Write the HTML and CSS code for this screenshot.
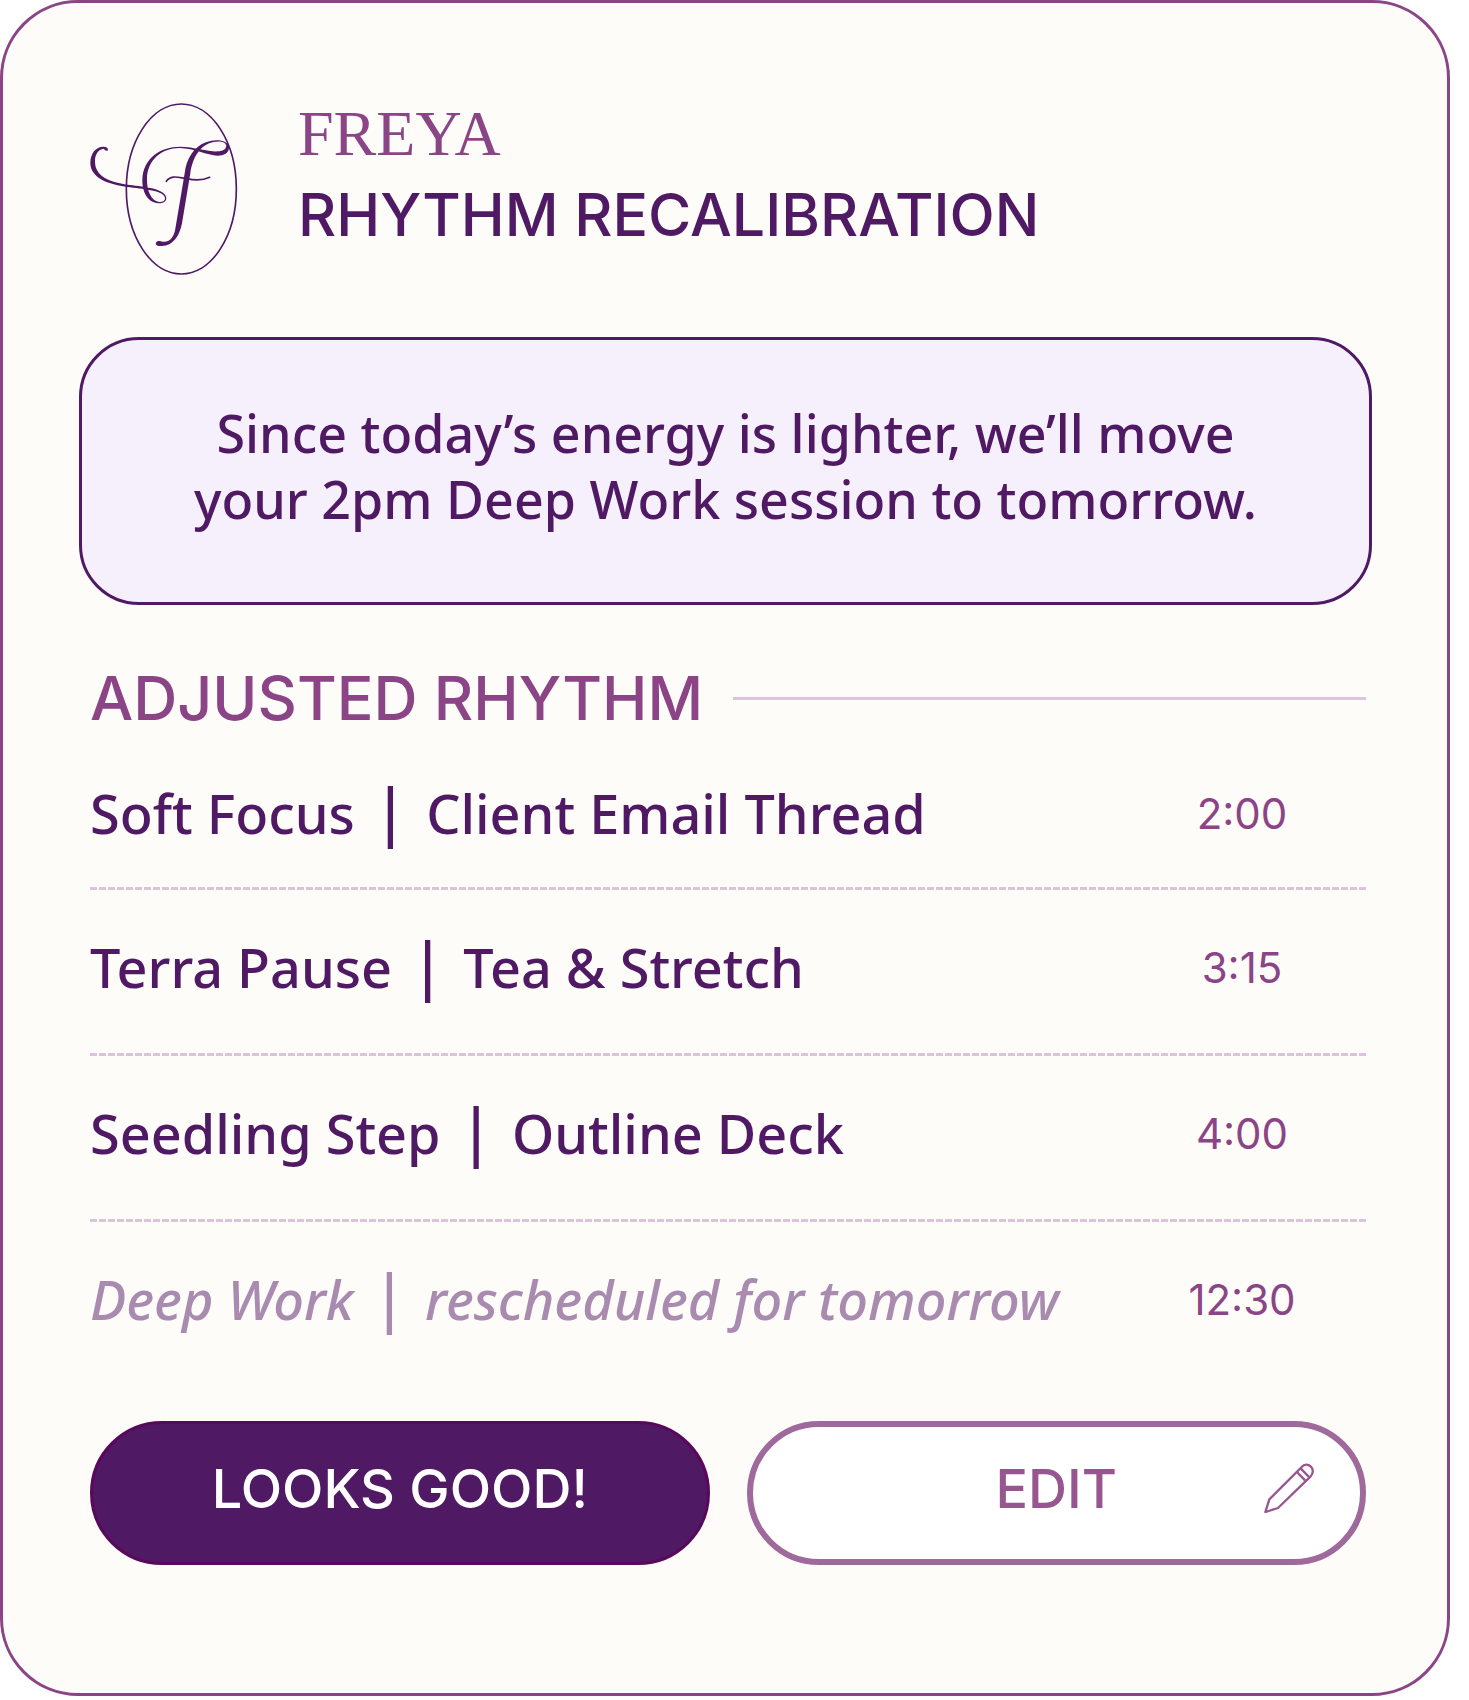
FILE: index.html
```html
<!DOCTYPE html>
<html lang="en">
<head>
    <meta charset="UTF-8">
    <meta name="viewport" content="width=device-width, initial-scale=1">
    <title>Freya - Rhythm Recalibration</title>
    <link rel="stylesheet" href="styles.css">
</head>
<body>
    <main class="card">
        <header class="header">
            <svg class="logo" viewBox="60 38 444 518" aria-hidden="true">
                <ellipse cx="334" cy="297" rx="165" ry="255" fill="none" stroke="currentColor" stroke-width="5"/>
                <!-- left swash -->
                <path d="M113 182 Q103 183 102 176 C84 177 74 195 75 216 C76 258 115 277 180 285 C222 290 287 296 289 324 C289 334 280 340 266 340 C231 338 216 302 217 270 C218 205 272 170 330 170 C376 171 416 186 444 184 C459 182 467 179 469 167 C466 154 448 152 430 156 C389 165 367 205 361 250 L336 400 C329 438 308 469 274 468 C260 469 256 464 258 458 C260 452 269 452 278 455 C301 458 313 437 316 416 L344 250 C349 209 369 171 408 157 C439 144 475 151 477 171 C478 190 461 197 443 197 C410 196 374 175 329 174 C275 174 232 210 231 266 C230 302 244 333 268 336 C278 336 285 333 285 324 C282 302 229 299 180 292 C110 283 61 262 61 218 C61 190 78 169 102 170 C112 171 115 174 113 182 Z" fill="currentColor"/>
                <!-- crossbar -->
                <path d="M289 274 C302 255 320 261 350 266 C377 272 402 270 419 262" fill="none" stroke="currentColor" stroke-width="5" stroke-linecap="round"/>
            </svg>
            <div class="titles">
                <p class="brand">FREYA</p>
                <h1>RHYTHM RECALIBRATION</h1>
            </div>
        </header>

        <p class="message">Since today’s energy is lighter, we’ll move<br>your 2pm Deep Work session to tomorrow.</p>

        <section class="rhythm">
            <h2>ADJUSTED RHYTHM</h2>
            <ul class="schedule">
                <li>
                    <span class="task">Soft Focus <span class="bar">|</span> Client Email Thread</span>
                    <time datetime="14:00">2:00</time>
                </li>
                <li>
                    <span class="task">Terra Pause <span class="bar">|</span> Tea &amp; Stretch</span>
                    <time datetime="15:15">3:15</time>
                </li>
                <li>
                    <span class="task">Seedling Step <span class="bar">|</span> Outline Deck</span>
                    <time datetime="16:00">4:00</time>
                </li>
                <li class="moved">
                    <span class="task">Deep Work <span class="bar">|</span> rescheduled for tomorrow</span>
                    <time datetime="12:30">12:30</time>
                </li>
            </ul>
        </section>

        <div class="actions">
            <button type="button" class="btn confirm">LOOKS GOOD!</button>
            <button type="button" class="btn edit">
                <span class="label">EDIT</span>
                <svg class="pencil" viewBox="190 196 150 150" fill="none" stroke="currentColor" stroke-width="7" stroke-linejoin="round" aria-hidden="true">
                    <path d="M194 343 L206 305 L303 208 C311 199 322 199 330 206 C339 214 338 227 330 236 L232 331 Z"/>
                    <path d="M289 223 L313 248 M300 212 L325 238"/>
                </svg>
            </button>
        </div>
    </main>
</body>
</html>
```
FILE: styles.css
```css
* {
    box-sizing: border-box;
}
body {
    margin: 0;
    background-color: white;
    color: #4f1964;
    font-family: "Noto Sans", sans-serif;
}
.card {
    margin-right: 19px;
    padding: 99px 75px 128px 76px;
    background-color: #fdfcf9;
    border: 3px solid #8b4587;
    border-radius: 78px;
}
.header {
    display: flex;
    gap: 60px;
    padding: 0 11px;
}
.logo {
    width: 148px;
    height: 174px;
}
.brand {
    margin: 0;
    font-family: "Liberation Serif", serif;
    font-size: 64px;
    line-height: 64px;
    color: #8b4587;
}
h1 {
    margin: 17px 0 0;
    font-family: Inter, sans-serif;
    font-size: 59px;
    line-height: 64px;
    font-weight: 500;
}
.message {
    margin: 61px 0 0;
    padding: 60px 20px 70px;
    background-color: #f6f0fc;
    border: 3px solid #4f1964;
    border-radius: 60px;
    font-size: 52px;
    line-height: 66px;
    font-weight: 500;
    text-align: center;
}
.rhythm {
    padding: 0 6px 0 11px;
}
h2 {
    display: flex;
    align-items: center;
    gap: 30px;
    margin: 61px 0 0;
    font-family: Inter, sans-serif;
    font-size: 61px;
    line-height: 64px;
    font-weight: 500;
    color: #8b4587;
}
h2::after {
    content: "";
    flex: 1;
    height: 3px;
    background-color: #dcc4dc;
}
.schedule {
    margin: 18px 0 0;
    padding: 0;
    list-style: none;
}
.schedule li {
    display: flex;
    align-items: center;
    justify-content: space-between;
    height: 166px;
    padding-bottom: 12px;
    background: repeating-linear-gradient(90deg, #dac4d8 0 7px, transparent 7px 9px) bottom / 100% 3px no-repeat;
}
.schedule li:first-child {
    height: 142px;
}
.schedule .moved {
    background: none;
}
.task {
    font-size: 54px;
    line-height: 66px;
    font-weight: 500;
}
.bar {
    margin: 0 4px;
    font-size: 64px;
    line-height: 1px;
}
.moved .task {
    color: #a98bb0;
    font-style: italic;
}
.moved .bar {
    font-style: normal;
}
time {
    width: 248px;
    font-family: Inter, sans-serif;
    font-size: 42px;
    text-align: center;
    color: #8b4587;
}
.actions {
    display: grid;
    grid-template-columns: 1fr 1fr;
    gap: 37px;
    margin-top: 33px;
    padding: 0 6px 0 11px;
}
.btn {
    height: 144px;
    padding: 0 46px 10px;
    border-radius: 72px;
    font-family: Inter, sans-serif;
    font-size: 54px;
    font-weight: 500;
    cursor: pointer;
}
.confirm {
    background-color: #4f1964;
    border: 3px solid #5a085c;
    color: white;
}
.edit {
    display: grid;
    grid-template-columns: 1fr auto 1fr;
    align-items: center;
    background-color: white;
    border: 6px solid #a0699c;
    color: #985690;
}
.label {
    grid-column: 2;
}
.pencil {
    justify-self: end;
    width: 50px;
    height: 50px;
}
```
